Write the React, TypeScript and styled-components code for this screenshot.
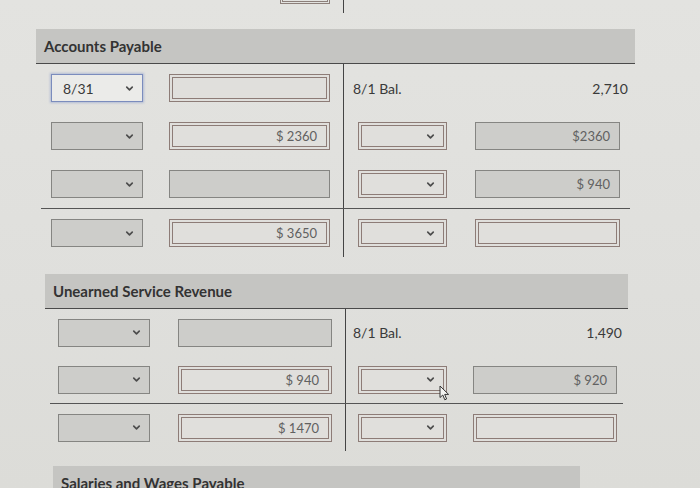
import styled, { createGlobalStyle, css } from 'styled-components';
import { ChevronDown } from 'lucide-react';

const GlobalStyle = createGlobalStyle`
  body {
    margin: 0;
    background: #dfdfdc;
    font-family: Lato, "Liberation Sans", sans-serif;
  }
`;

const Page = styled.div`
  width: 700px;
  height: 488px;
  overflow: hidden;
  background: linear-gradient(180deg, #e3e3e0 0%, #dfdfdc 60%, #dcdcd8 100%);
`;

// bottom of the previous account, cut off by the photo
const Tail = styled.div`
  display: flex;
  margin-left: 36px;
  width: 599px;
  height: 29px;
`;

const TailLeft = styled.div`
  width: 307px;
  box-sizing: border-box;
  display: flex;
  justify-content: flex-end;
  padding-right: 13px;
`;

const TailStub = styled.div`
  width: 50px;
  height: 4px;
  box-sizing: border-box;
  border: 3px double #8c7f7a;
  border-top: none;
`;

const TailLine = styled.div`
  height: 13px;
  border-left: 1.5px solid #444;
`;

const Account = styled.section<{ $left: number; $width: number; $top: number }>`
  margin-left: ${(p) => p.$left}px;
  margin-top: ${(p) => p.$top}px;
  width: ${(p) => p.$width}px;
`;

const Header = styled.h3`
  margin: 0;
  height: 35px;
  box-sizing: border-box;
  display: flex;
  align-items: center;
  padding-left: 8px;
  background: #c5c5c2;
  border-bottom: 1.5px solid #4a4a4a;
  font: 700 15px Lato, "Liberation Sans", sans-serif;
  color: #333;
`;

const Row = styled.div<{ $split: number; $h: number; $total?: boolean }>`
  display: grid;
  grid-template-columns: ${(p) => p.$split}px 1fr;
  height: ${(p) => p.$h}px;
  margin-left: ${(p) => (p.$total ? 5 : 0)}px;
  margin-right: ${(p) => (p.$total ? 5 : 0)}px;
  border-top: ${(p) => (p.$total ? '1.5px solid #555' : 'none')};
  ${(p) => p.$total && css`
    grid-template-columns: ${p.$split - 5}px 1fr;
  `}
`;

const LeftCell = styled.div<{ $pl: number; $gap: number; $shift?: number }>`
  display: grid;
  grid-template-columns: 92px 1fr;
  column-gap: ${(p) => p.$gap}px;
  align-items: center;
  padding: 0 13px 0 ${(p) => p.$pl - (p.$shift ?? 0)}px;
`;

const RightCell = styled.div<{ $pl: number; $pr: number; $gap: number; $shift?: number }>`
  border-left: 1.5px solid #444;
  display: grid;
  grid-template-columns: 89px 1fr;
  column-gap: ${(p) => p.$gap}px;
  align-items: center;
  padding: 0 ${(p) => p.$pr - (p.$shift ?? 0)}px 0 ${(p) => p.$pl}px;
`;

const BalanceCell = styled.div<{ $pl: number; $pr: number }>`
  border-left: 1.5px solid #444;
  display: flex;
  justify-content: space-between;
  align-items: center;
  padding: 0 ${(p) => p.$pr}px 0 ${(p) => p.$pl}px;
  font-size: 14px;
  color: #3a3a3a;
`;

type Look = 'grey' | 'error' | 'focus';

const boxLook = {
  grey: css`
    background: #cdcdca;
    border: 1px solid #858582;
  `,
  error: css`
    background: #e0dfdc;
    border: 4px double #8d7c77;
  `,
  focus: css`
    background: #ebebe9;
    border: 1px solid #7b8cbd;
    box-shadow: 0 0 2px 1px rgba(120, 140, 200, 0.45);
  `,
};

const Select = styled.div<{ $look: Look }>`
  position: relative;
  height: 28px;
  box-sizing: border-box;
  display: flex;
  align-items: center;
  justify-content: space-between;
  padding: 0 7px 0 11px;
  font-size: 14px;
  color: #3a3a3a;
  ${(p) => boxLook[p.$look]}
  svg:first-of-type {
    margin-left: auto;
    color: #4c4c4c;
  }
`;

const Field = styled.div<{ $look: Look }>`
  height: 28px;
  box-sizing: border-box;
  display: flex;
  align-items: center;
  justify-content: flex-end;
  padding: 0 9px;
  font-size: 13px;
  color: #616161;
  ${(p) => boxLook[p.$look]}
`;

const Pointer = styled.svg`
  position: absolute;
  right: -7px;
  bottom: -11px;
  width: 11px;
  height: 16px;
`;

type Box = { look: Look; text?: string; cursor?: boolean };
type Line =
  | { kind: 'bal'; left: [Box, Box]; label: string; amount: string; total?: boolean }
  | { kind: 'pair'; left: [Box, Box]; right: [Box, Box]; total?: boolean };

type Geo = {
  left: number;
  width: number;
  top: number;
  split: number;
  rowH: number;
  lpl: number;
  lgap: number;
  rpl: number;
  rpr: number;
  rgap: number;
  bpl: number;
  bpr: number;
};

const Drop = ({ box }: { box: Box }) => (
  <Select $look={box.look}>
    {box.text}
    <ChevronDown size={11} strokeWidth={3.6} />
    {box.cursor && (
      <Pointer viewBox="0 0 11 16">
        <path
          d="M1 1 L1 12.5 L3.8 10 L5.8 14.8 L7.6 14 L5.7 9.4 L9.6 9.4 Z"
          fill="#f4f4f2"
          stroke="#333"
          strokeWidth="1"
          strokeLinejoin="round"
        />
      </Pointer>
    )}
  </Select>
);

const TAccount = ({ title, geo, lines }: { title: string; geo: Geo; lines: Line[] }) => (
  <Account $left={geo.left} $width={geo.width} $top={geo.top}>
    <Header>{title}</Header>
    {lines.map((ln, i) => {
      const shift = ln.total ? 5 : 0;
      return (
        <Row key={i} $split={geo.split} $h={geo.rowH} $total={ln.total}>
          <LeftCell $pl={geo.lpl} $gap={geo.lgap} $shift={shift}>
            <Drop box={ln.left[0]} />
            <Field $look={ln.left[1].look}>{ln.left[1].text}</Field>
          </LeftCell>
          {ln.kind === 'bal' ? (
            <BalanceCell $pl={geo.bpl} $pr={geo.bpr}>
              <span>{ln.label}</span>
              <span>{ln.amount}</span>
            </BalanceCell>
          ) : (
            <RightCell $pl={geo.rpl} $pr={geo.rpr} $gap={geo.rgap} $shift={shift}>
              <Drop box={ln.right[0]} />
              <Field $look={ln.right[1].look}>{ln.right[1].text}</Field>
            </RightCell>
          )}
        </Row>
      );
    })}
  </Account>
);

const payable: Line[] = [
  {
    kind: 'bal',
    left: [{ look: 'focus', text: '8/31' }, { look: 'error' }],
    label: '8/1 Bal.',
    amount: '2,710',
  },
  {
    kind: 'pair',
    left: [{ look: 'grey' }, { look: 'error', text: '$ 2360' }],
    right: [{ look: 'error' }, { look: 'grey', text: '$2360' }],
  },
  {
    kind: 'pair',
    left: [{ look: 'grey' }, { look: 'grey' }],
    right: [{ look: 'error' }, { look: 'grey', text: '$ 940' }],
  },
  {
    kind: 'pair',
    total: true,
    left: [{ look: 'grey' }, { look: 'error', text: '$ 3650' }],
    right: [{ look: 'error' }, { look: 'error' }],
  },
];

const unearned: Line[] = [
  {
    kind: 'bal',
    left: [{ look: 'grey' }, { look: 'grey' }],
    label: '8/1 Bal.',
    amount: '1,490',
  },
  {
    kind: 'pair',
    left: [{ look: 'grey' }, { look: 'error', text: '$ 940' }],
    right: [{ look: 'error', cursor: true }, { look: 'grey', text: '$ 920' }],
  },
  {
    kind: 'pair',
    total: true,
    left: [{ look: 'grey' }, { look: 'error', text: '$ 1470' }],
    right: [{ look: 'error' }, { look: 'error' }],
  },
];

export default function App() {
  return (
    <>
      <GlobalStyle />
      <Page>
        <Tail>
          <TailLeft>
            <TailStub />
          </TailLeft>
          <TailLine />
        </Tail>
        <TAccount
          title="Accounts Payable"
          lines={payable}
          geo={{ left: 36, width: 599, top: 0, split: 307, rowH: 48, lpl: 15, lgap: 26, rpl: 14, rpr: 15, rgap: 28, bpl: 9, bpr: 7 }}
        />
        <TAccount
          title="Unearned Service Revenue"
          lines={unearned}
          geo={{ left: 45, width: 583, top: 17, split: 300, rowH: 47, lpl: 13, lgap: 28, rpl: 12, rpr: 11, rgap: 26, bpl: 7, bpr: 6 }}
        />
        <Account $left={53} $width={527} $top={15}>
          <Header>Salaries and Wages Payable</Header>
        </Account>
      </Page>
    </>
  );
}
